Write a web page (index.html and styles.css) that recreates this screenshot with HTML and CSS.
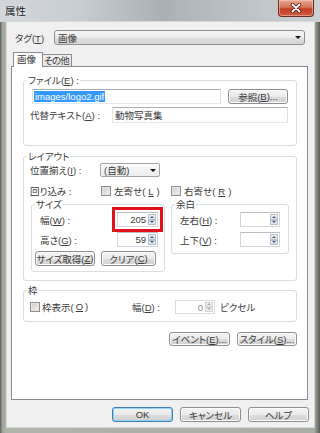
FILE: index.html
```html
<!DOCTYPE html>
<html lang="ja">
<head>
    <meta charset="UTF-8">
    <meta name="viewport" content="width=device-width, initial-scale=1.0">
    <title>属性</title>
    <link rel="stylesheet" href="styles.css">
</head>
<body>

<div class="window">

    <!-- Title bar -->
    <div class="titlebar">
        <span class="title">属性</span>
        <button class="close-btn" aria-label="閉じる">
            <svg width="12" height="10" viewBox="0 0 12 10">
                <path d="M2.5 1.5 L9.5 8.5 M9.5 1.5 L2.5 8.5" stroke="#5e1d14" stroke-width="3.6" stroke-linecap="round"/>
                <path d="M2.5 1.5 L9.5 8.5 M9.5 1.5 L2.5 8.5" stroke="#fff" stroke-width="1.9" stroke-linecap="round"/>
            </svg>
        </button>
    </div>

    <div class="frame">
        <div class="client">

            <div class="tag-row">
                <span class="tag-label">タグ(<u>T</u>)</span>
                <div class="combo tag-combo"><span>画像</span><i class="arrow"></i></div>
            </div>

            <!-- Tabs -->
            <div class="tabs">
                <span class="tab active">画像</span>
                <span class="tab">その他</span>
            </div>

            <div class="panel">

                <!-- File -->
                <div class="group file-group">
                    <span class="group-title">ファイル(<u>E</u>) :</span>
                    <div class="row file-row">
                        <div class="input file-input"><span class="selected">images/logo2.gif</span></div>
                        <button class="btn browse-btn">参照(<u>B</u>)...</button>
                    </div>
                    <div class="row alt-row">
                        <span class="alt-label">代替テキスト(<u>A</u>) :</span>
                        <div class="input alt-input">動物写真集</div>
                    </div>
                </div>

                <!-- Layout -->
                <div class="group layout-group">
                    <span class="group-title">レイアウト</span>
                    <div class="row align-row">
                        <span class="layout-label">位置揃え(<u>I</u>) :</span>
                        <div class="combo align-combo"><span>(自動)</span><i class="arrow"></i></div>
                    </div>
                    <div class="row wrap-row">
                        <span class="layout-label wrap-label">回り込み :</span>
                        <span class="check-item wrap-left"><i class="check"></i>左寄せ(<u>L</u>)</span>
                        <span class="check-item"><i class="check"></i>右寄せ(<u>R</u>)</span>
                    </div>

                    <div class="subgroups">
                        <div class="group size-group">
                            <span class="group-title">サイズ</span>
                            <div class="row spin-row">
                                <span class="size-label">幅(<u>W</u>) :</span>
                                <div class="spin highlighted">
                                    <span class="spin-value">205</span>
                                    <span class="spin-btns"><i class="up"></i><i class="down"></i></span>
                                </div>
                            </div>
                            <div class="row spin-row">
                                <span class="size-label">高さ(<u>G</u>) :</span>
                                <div class="spin">
                                    <span class="spin-value">59</span>
                                    <span class="spin-btns"><i class="up"></i><i class="down"></i></span>
                                </div>
                            </div>
                            <div class="row size-buttons">
                                <button class="btn size-btn">サイズ取得(<u>Z</u>)</button>
                                <button class="btn clear-btn">クリア(<u>C</u>)</button>
                            </div>
                        </div>

                        <div class="group margin-group">
                            <span class="group-title">余白</span>
                            <div class="row spin-row">
                                <span class="margin-label">左右(<u>H</u>) :</span>
                                <div class="spin margin-spin">
                                    <span class="spin-value"></span>
                                    <span class="spin-btns"><i class="up"></i><i class="down"></i></span>
                                </div>
                            </div>
                            <div class="row spin-row">
                                <span class="margin-label">上下(<u>V</u>) :</span>
                                <div class="spin margin-spin">
                                    <span class="spin-value"></span>
                                    <span class="spin-btns"><i class="up"></i><i class="down"></i></span>
                                </div>
                            </div>
                        </div>
                    </div>
                </div>

                <!-- Border -->
                <div class="group border-group">
                    <span class="group-title">枠</span>
                    <div class="row border-row">
                        <span class="check-item border-check"><i class="check"></i>枠表示(<u>O</u>)</span>
                        <span class="border-width-label">幅(<u>D</u>) :</span>
                        <div class="spin margin-spin disabled">
                            <span class="spin-value">0</span>
                            <span class="spin-btns"><i class="up"></i><i class="down"></i></span>
                        </div>
                        <span class="unit">ピクセル</span>
                    </div>
                </div>

                <div class="panel-buttons">
                    <button class="btn event-btn">イベント(<u>E</u>)...</button>
                    <button class="btn style-btn">スタイル(<u>S</u>)...</button>
                </div>

            </div>

            <!-- Dialog buttons -->
            <div class="dialog-buttons">
                <button class="btn default">OK</button>
                <button class="btn">キャンセル</button>
                <button class="btn">ヘルプ</button>
            </div>

        </div>
    </div>
</div>

</body>
</html>
```

FILE: styles.css
```css
/* Reset */
* {
    box-sizing: border-box;
    margin: 0;
    padding: 0;
}

html, body {
    width: 320px;
    height: 433px;
    overflow: hidden;
}

body {
    font-family: "Liberation Sans", "Noto Sans CJK JP", sans-serif;
    font-size: 9.5px;
    font-feature-settings: "palt";
    color: #3a3a3a;
    background: #80867c;
}

u {
    text-decoration-thickness: 1px;
    text-underline-offset: 1px;
}

button {
    font: inherit;
    color: inherit;
}

/* Window chrome */
.window {
    height: 433px;
    display: flex;
    flex-direction: column;
}

.titlebar {
    height: 22px;
    display: flex;
    align-items: flex-start;
    padding-left: 5px;
    background: linear-gradient(90deg, #d3d7db 0%, #c8cdd1 25%, #aab0b5 50%, #bcc1c6 75%, #cdd1d5 100%);
}

.title {
    font-size: 10.5px;
    line-height: 13px;
    margin-top: 5px;
    color: #1c1c1c;
    text-shadow: 0 0 5px #f4f6f8;
}

.close-btn {
    margin-left: auto;
    margin-right: 6px;
    width: 36px;
    height: 17px;
    border: 1px solid #6e2a20;
    border-top: none;
    border-radius: 0 0 4px 4px;
    background: linear-gradient(#e8a593 0%, #d6735d 45%, #c2402a 55%, #cf5a3f 100%);
    box-shadow: inset 0 0 0 1px rgba(255, 210, 195, 0.5);
    display: flex;
    align-items: center;
    justify-content: center;
}

.frame {
    flex: 1;
    padding: 0 6px 6px 7px;
    background: linear-gradient(90deg, #555a52 0, #9ca196 2px, #b0b4ab 6px, #aaaea5 calc(100% - 6px), #595e56 100%);
}

.client {
    height: 405px;
    padding: 8px 5px 0 4px;
    background: #f0f0f0;
    box-shadow: 0 0 0 1px #d5d8d4;
}

/* Tag row */
.tag-row {
    display: flex;
    align-items: center;
    height: 15px;
}

.tag-label {
    width: 39px;
    margin-left: 4px;
}

.combo {
    display: flex;
    align-items: center;
    justify-content: space-between;
    border: 1px solid #8e8f8f;
    border-radius: 3px;
    background: linear-gradient(#f4f4f4 0%, #ececec 50%, #dfdfdf 51%, #d6d6d6 100%);
    padding: 0 3px;
}

.tag-combo {
    width: 251px;
    height: 15px;
}

.arrow {
    width: 0;
    height: 0;
    border-left: 3px solid transparent;
    border-right: 3px solid transparent;
    border-top: 3px solid #111;
}

/* Tabs */
.tabs {
    display: flex;
    align-items: flex-end;
    height: 14px;
    margin-top: 7px;
    padding-left: 2px;
}

.tab {
    height: 12px;
    width: 29px;
    border: 1px solid #898c95;
    border-bottom: none;
    border-left: none;
    background: linear-gradient(#f3f3f3, #e4e4e4);
    line-height: 11px;
    padding-left: 1px;
    letter-spacing: -0.7px;
    white-space: nowrap;
}

.tab.active {
    position: relative;
    z-index: 1;
    height: 15px;
    width: 30px;
    margin-bottom: -1px;
    border-left: 1px solid #898c95;
    background: #fff;
    line-height: 13px;
    padding-left: 3px;
    letter-spacing: 0;
}

/* Tab panel */
.panel {
    width: 297px;
    height: 334px;
    border: 1px solid #898c95;
    background: #fff;
    padding: 13px 10px 0 11px;
}

/* Group boxes */
.group {
    border: 1px solid #d5dfe5;
    border-radius: 3px;
}

.group-title {
    display: block;
    width: fit-content;
    margin: -6px 0 0 3px;
    padding: 0 1px;
    line-height: 12px;
    background: #fff;
}

.row {
    display: flex;
    align-items: center;
}

.input {
    display: flex;
    align-items: center;
    background: #fff;
    border: 1px solid;
    border-color: #abadb3 #dbdfe6 #e3e9ef #e2e3ea;
    white-space: nowrap;
    overflow: hidden;
}

.btn {
    height: 15px;
    display: flex;
    align-items: center;
    justify-content: center;
    border: 1px solid #8f8f8f;
    border-radius: 3px;
    background: linear-gradient(#f4f4f4 0%, #ebebeb 50%, #dddddd 51%, #d1d1d1 100%);
    box-shadow: inset 0 0 0 1px #fbfbfb;
    white-space: nowrap;
}

.btn.default {
    border-color: #3c7fb1;
    box-shadow: inset 0 0 0 1px #8fd3f4;
}

/* File group */
.file-group {
    height: 66px;
}

.file-row {
    margin-top: 2px;
    padding-left: 8px;
    gap: 7px;
}

.file-input {
    width: 189px;
    height: 15px;
    padding-left: 1px;
}

.selected {
    background: #3399ff;
    color: #fff;
    line-height: 11px;
    padding: 0 1px;
}

.browse-btn {
    width: 60px;
}

.alt-row {
    margin-top: 3px;
    padding-left: 6px;
}

.alt-label {
    width: 82px;
}

.alt-input {
    width: 176px;
    height: 16px;
    padding-left: 2px;
}

/* Layout group */
.layout-group {
    margin-top: 10px;
    height: 125px;
}

.align-row {
    height: 14px;
    padding-left: 6px;
}

.layout-label {
    width: 70px;
}

.align-combo {
    width: 60px;
    height: 14px;
    border-color: #a5a5a5;
    border-radius: 2px;
    background: linear-gradient(#fbfbfb, #ececec);
}

.wrap-row {
    height: 14px;
    margin-top: 7px;
    padding-left: 6px;
}

.wrap-label {
    width: 71px;
}

.check-item {
    display: flex;
    align-items: center;
    gap: 3px;
}

.wrap-left {
    width: 70px;
}

.check {
    width: 10px;
    height: 10px;
    border: 1px solid #8e8f8f;
    background: linear-gradient(135deg, #cbcbcb, #f3f3f3);
    box-shadow: inset 0 0 0 1px #e6e6e6;
}

.subgroups {
    display: flex;
    align-items: flex-start;
    gap: 6px;
    margin-top: 6px;
    padding-left: 7px;
}

.size-group {
    width: 134px;
    height: 68px;
}

.margin-group {
    width: 118px;
    height: 50px;
}

.spin-row {
    height: 15px;
    padding-left: 8px;
    margin-top: 1px;
}

.spin-row + .spin-row {
    margin-top: 5px;
}

.size-label {
    width: 77px;
}

.margin-label {
    width: 60px;
}

/* Spin boxes */
.spin {
    display: flex;
    align-items: stretch;
    width: 41px;
    height: 15px;
    background: #fff;
    border: 1px solid #d3d6da;
    border-top-color: #b9bcc1;
}

.spin-value {
    flex: 1;
    text-align: right;
    padding-right: 2px;
    line-height: 13px;
}

.spin-btns {
    display: flex;
    flex-direction: column;
    width: 8px;
    margin: 1px 1px 1px 0;
}

.spin-btns i {
    flex: 1;
    display: flex;
    align-items: center;
    justify-content: center;
    border: 1px solid #b4c0cc;
    background: linear-gradient(#f1f5f9, #d9e2eb);
}

.spin-btns i::after {
    content: "";
    width: 0;
    height: 0;
    border-left: 2px solid transparent;
    border-right: 2px solid transparent;
}

.spin-btns .up::after {
    border-bottom: 2px solid #4a5a72;
}

.spin-btns .down::after {
    border-top: 2px solid #4a5a72;
}

.spin.highlighted {
    outline: 3px solid #e2121c;
    outline-offset: 2px;
}

.margin-spin {
    width: 40px;
}

.spin.disabled {
    height: 14px;
    color: #8c8c8c;
    border-color: #dadada;
}

.spin.disabled .spin-btns i {
    border-color: #d3d3d3;
    background: linear-gradient(#f7f7f7, #e9e9e9);
}

.spin.disabled .spin-btns i::after {
    border-bottom-color: #a8a8a8;
    border-top-color: #a8a8a8;
}

.size-buttons {
    margin-top: 4px;
    padding-left: 3px;
    gap: 6px;
}

.size-btn {
    width: 60px;
}

.clear-btn {
    width: 55px;
}

/* Border group */
.border-group {
    margin-top: 9px;
    height: 32px;
}

.border-row {
    height: 15px;
    margin-top: 2px;
    padding-left: 6px;
}

.border-check {
    width: 102px;
    gap: 2px;
}

.border-width-label {
    width: 43px;
}

.unit {
    margin-left: 5px;
}

.panel-buttons {
    display: flex;
    justify-content: flex-end;
    gap: 7px;
    margin-top: 10px;
}

.event-btn {
    width: 61px;
    height: 14px;
}

.style-btn {
    width: 60px;
    height: 14px;
}

/* Dialog buttons */
.dialog-buttons {
    display: flex;
    justify-content: flex-end;
    gap: 7px;
    margin-top: 7px;
}

.dialog-buttons .btn {
    width: 61px;
}
```
